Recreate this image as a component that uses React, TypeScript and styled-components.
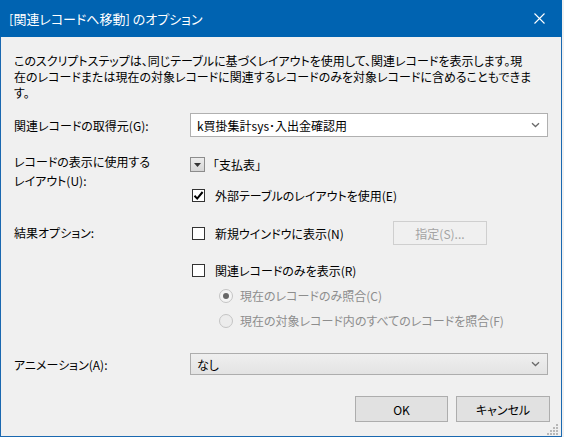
import React from "react";
import styled, { createGlobalStyle } from "styled-components";

const Global = createGlobalStyle`
  html, body { margin: 0; padding: 0; background: #f0f0f0; }
  body { font-family: "Noto Sans CJK JP", "Noto Sans", sans-serif; font-size: 12px; color: #000; }
  * { box-sizing: border-box; }
`;

const Window = styled.div`
  width: 562px;
  height: 437px;
  border: 1px solid #1a68b0;
  border-top: none;
  background: #f0f0f0;
  display: flex;
  flex-direction: column;
  position: relative;
  font-feature-settings: "palt";
`;

const TitleBar = styled.div`
  height: 37px;
  background: #0063b1;
  color: #fff;
  display: flex;
  align-items: center;
  justify-content: space-between;
  padding: 0 0 1px 9px;
  font-size: 13px;
  margin: 0 -1px;
`;

const CloseBtn = styled.div`
  width: 46px;
  height: 36px;
  display: flex;
  align-items: center;
  justify-content: center;
`;

const Body = styled.div`
  flex: 1;
  display: flex;
  flex-direction: column;
  padding: 0 11px 0 13px;
`;

const Description = styled.div`
  margin-top: 16px;
  line-height: 16px;
  white-space: nowrap;
`;

const FormRow = styled.div<{ $top: number }>`
  display: grid;
  grid-template-columns: 176px 1fr;
  margin-top: ${(p) => p.$top}px;
`;

const Label = styled.div<{ $lh?: number }>`
  line-height: ${(p) => p.$lh ?? 19}px;
  align-self: ${(p) => (p.$lh ? "start" : "center")};
`;

const Controls = styled.div`
  display: flex;
  flex-direction: column;
`;

const Select = styled.div<{ $gray?: boolean; $h: number }>`
  width: 358px;
  height: ${(p) => p.$h}px;
  border: 1px solid ${(p) => (p.$gray ? "#adadad" : "#b0b0b0")};
  background: ${(p) => (p.$gray ? "linear-gradient(#efefef, #e3e3e3)" : "#fff")};
  display: flex;
  align-items: center;
  justify-content: space-between;
  padding: 0 7px 0 6px;
`;

const Line = styled.div<{ $top?: number; $h: number; $indent?: number }>`
  display: flex;
  align-items: center;
  height: ${(p) => p.$h}px;
  margin-top: ${(p) => p.$top ?? 0}px;
  padding-left: ${(p) => p.$indent ?? 0}px;
`;

const MiniDrop = styled.div`
  width: 15px;
  height: 15px;
  border: 1px solid #8c8c8c;
  background: linear-gradient(#ececec, #d6d6d6);
  display: flex;
  align-items: center;
  justify-content: center;
  margin-right: 2px;
`;

const FullWidth = styled.span`
  font-feature-settings: normal;
`;

const Box = styled.div`
  width: 13px;
  height: 13px;
  border: 1px solid #333;
  background: #fff;
  display: flex;
  align-items: center;
  justify-content: center;
  margin: 0 10px 0 2px;
`;

const Radio = styled.div<{ $on?: boolean }>`
  width: 14px;
  height: 14px;
  border-radius: 50%;
  border: 1px solid #c4c4c4;
  background: ${(p) => (p.$on ? "#f4f4f4" : "#ececec")};
  display: flex;
  align-items: center;
  justify-content: center;
  margin-right: 7px;
  &::after {
    content: "";
    display: ${(p) => (p.$on ? "block" : "none")};
    width: 6px;
    height: 6px;
    border-radius: 50%;
    background: #676767;
  }
`;

const Muted = styled.span`
  color: #8d8d8d;
`;

const PushButton = styled.div<{ $disabled?: boolean; $w: number; $h: number }>`
  width: ${(p) => p.$w}px;
  height: ${(p) => p.$h}px;
  border: 1px solid ${(p) => (p.$disabled ? "#cfcfcf" : "#adadad")};
  background: ${(p) => (p.$disabled ? "#f0f0f0" : "#e1e1e1")};
  color: ${(p) => (p.$disabled ? "#a3a3a3" : "#000")};
  display: flex;
  align-items: center;
  justify-content: center;
`;

const SideButton = styled(PushButton)`
  margin-left: auto;
  margin-right: 63px;
`;

const ButtonBar = styled.div`
  display: flex;
  justify-content: flex-end;
  gap: 8px;
  margin-top: 21px;
`;

const Grip = styled.div`
  position: absolute;
  right: 2px;
  bottom: 2px;
  width: 12px;
  height: 12px;
`;

const Chevron = () => (
  <svg width="9" height="6" viewBox="0 0 9 6">
    <path d="M1 1.2 L4.5 4.5 L8 1.2" fill="none" stroke="#6a6a6a" strokeWidth="1.3" />
  </svg>
);

const Check = () => (
  <svg width="11" height="11" viewBox="0 0 11 11">
    <path d="M1.5 5.8 L4.2 8.6 L9.6 2" fill="none" stroke="#000" strokeWidth="2" />
  </svg>
);

export default function App() {
  return (
    <>
      <Global />
      <Window>
        <TitleBar>
          <span>[関連レコードへ移動] のオプション</span>
          <CloseBtn>
            <svg width="11" height="11" viewBox="0 0 11 11">
              <path d="M0.5 0.5 L10.5 10.5 M10.5 0.5 L0.5 10.5" stroke="#fff" strokeWidth="1.1" />
            </svg>
          </CloseBtn>
        </TitleBar>
        <Body>
          <Description>
            このスクリプトステップは、同じテーブルに基づくレイアウトを使用して、関連レコードを表示します。現
            <br />
            在のレコードまたは現在の対象レコードに関連するレコードのみを対象レコードに含めることもできま
            <br />
            す。
          </Description>

          <FormRow $top={12}>
            <Label>関連レコードの取得元(G):</Label>
            <Select $h={24}>
              <span>k買掛集計sys･入出金確認用</span>
              <Chevron />
            </Select>
          </FormRow>

          <FormRow $top={15}>
            <Label $lh={19}>
              レコードの表示に使用する
              <br />
              レイアウト(U):
            </Label>
            <Controls>
              <Line $top={5} $h={15}>
                <MiniDrop>
                  <svg width="7" height="4" viewBox="0 0 7 4">
                    <path d="M0 0 H7 L3.5 4 Z" fill="#333" />
                  </svg>
                </MiniDrop>
                <FullWidth>「支払表」</FullWidth>
              </Line>
              <Line $top={14} $h={18}>
                <Box>
                  <Check />
                </Box>
                <span>外部テーブルのレイアウトを使用(E)</span>
              </Line>
            </Controls>
          </FormRow>

          <FormRow $top={17}>
            <Label $lh={24}>結果オプション:</Label>
            <Controls>
              <Line $h={24}>
                <Box />
                <span>新規ウインドウに表示(N)</span>
                <SideButton $disabled $w={94} $h={24}>
                  指定(S)...
                </SideButton>
              </Line>
              <Line $top={12} $h={26}>
                <Box />
                <span>関連レコードのみを表示(R)</span>
              </Line>
              <Line $h={25} $indent={29}>
                <Radio $on />
                <Muted>現在のレコードのみ照合(C)</Muted>
              </Line>
              <Line $h={25} $indent={29}>
                <Radio />
                <Muted>現在の対象レコード内のすべてのレコードを照合(F)</Muted>
              </Line>
            </Controls>
          </FormRow>

          <FormRow $top={20}>
            <Label>アニメーション(A):</Label>
            <Select $gray $h={22}>
              <span>なし</span>
              <Chevron />
            </Select>
          </FormRow>

          <ButtonBar>
            <PushButton $w={93} $h={26}>OK</PushButton>
            <PushButton $w={94} $h={26}>キャンセル</PushButton>
          </ButtonBar>
        </Body>
        <Grip>
          <svg width="12" height="12" viewBox="0 0 12 12">
            {[
              [9, 0], [9, 3], [6, 3], [9, 6], [6, 6], [3, 6], [9, 9], [6, 9], [3, 9], [0, 9],
            ].map(([x, y], i) => (
              <rect key={i} x={x} y={y} width="2" height="2" fill="#b8b8b8" />
            ))}
          </svg>
        </Grip>
      </Window>
    </>
  );
}
